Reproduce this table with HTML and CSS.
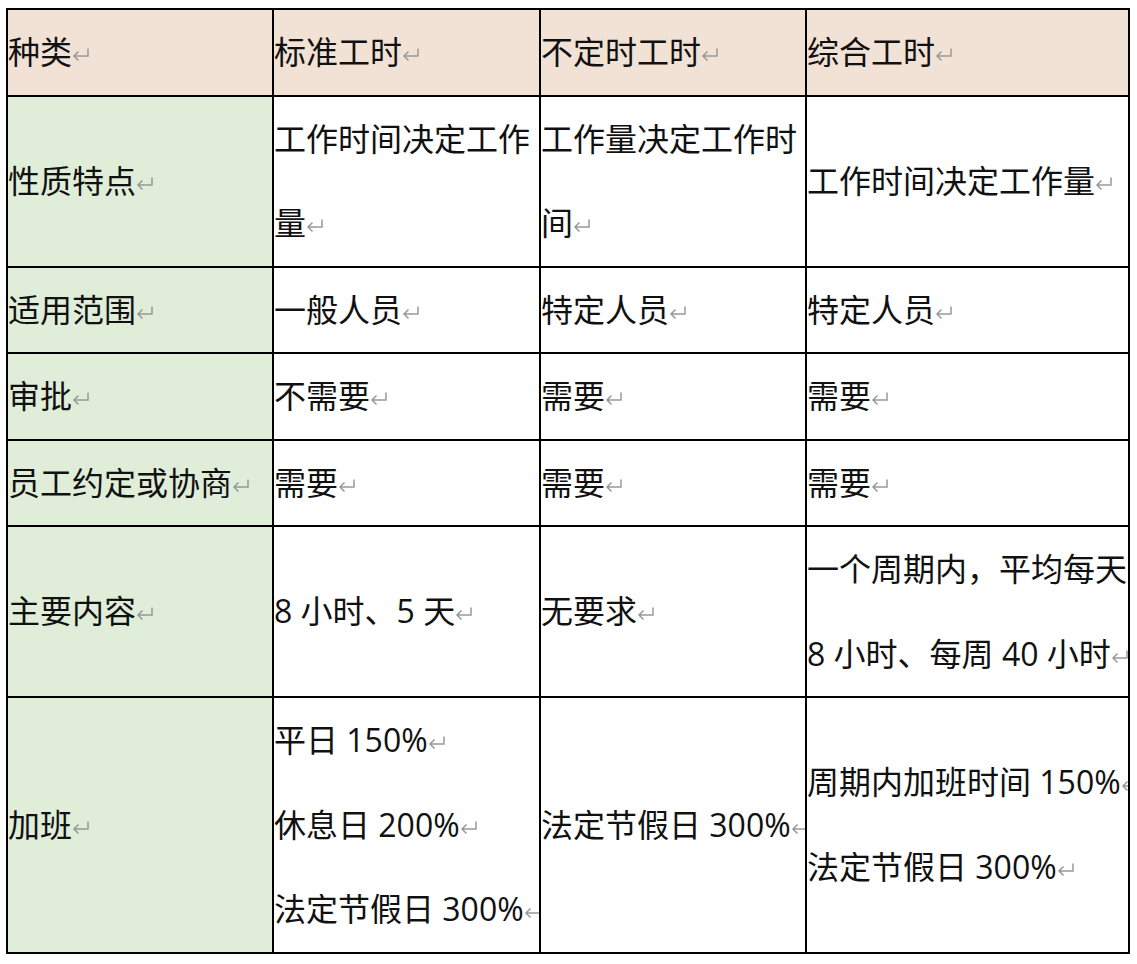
FILE: index.html
```html
<!DOCTYPE html>
<html lang="zh-CN">
<head>
<meta charset="utf-8">
<title>工时制度对比</title>
<link rel="stylesheet" href="styles.css">
</head>
<body>
<table class="tbl">
  <colgroup>
    <col class="c1"><col class="c2"><col class="c3"><col class="c4">
  </colgroup>
  <tr class="head">
    <td>种类<svg class="rm" viewBox="0 0 18 16"><path d="M16 1.5V9H2M6.5 4.5L2 9L6.5 13.5"/></svg></td>
    <td>标准工时<svg class="rm" viewBox="0 0 18 16"><path d="M16 1.5V9H2M6.5 4.5L2 9L6.5 13.5"/></svg></td>
    <td>不定时工时<svg class="rm" viewBox="0 0 18 16"><path d="M16 1.5V9H2M6.5 4.5L2 9L6.5 13.5"/></svg></td>
    <td>综合工时<svg class="rm" viewBox="0 0 18 16"><path d="M16 1.5V9H2M6.5 4.5L2 9L6.5 13.5"/></svg></td>
  </tr>
  <tr>
    <td class="lab">性质特点<svg class="rm" viewBox="0 0 18 16"><path d="M16 1.5V9H2M6.5 4.5L2 9L6.5 13.5"/></svg></td>
    <td><span class="ln">工作时间决定工作</span><span class="ln">量<svg class="rm" viewBox="0 0 18 16"><path d="M16 1.5V9H2M6.5 4.5L2 9L6.5 13.5"/></svg></span></td>
    <td><span class="ln">工作量决定工作时</span><span class="ln">间<svg class="rm" viewBox="0 0 18 16"><path d="M16 1.5V9H2M6.5 4.5L2 9L6.5 13.5"/></svg></span></td>
    <td>工作时间决定工作量<svg class="rm" viewBox="0 0 18 16"><path d="M16 1.5V9H2M6.5 4.5L2 9L6.5 13.5"/></svg></td>
  </tr>
  <tr>
    <td class="lab">适用范围<svg class="rm" viewBox="0 0 18 16"><path d="M16 1.5V9H2M6.5 4.5L2 9L6.5 13.5"/></svg></td>
    <td>一般人员<svg class="rm" viewBox="0 0 18 16"><path d="M16 1.5V9H2M6.5 4.5L2 9L6.5 13.5"/></svg></td>
    <td>特定人员<svg class="rm" viewBox="0 0 18 16"><path d="M16 1.5V9H2M6.5 4.5L2 9L6.5 13.5"/></svg></td>
    <td>特定人员<svg class="rm" viewBox="0 0 18 16"><path d="M16 1.5V9H2M6.5 4.5L2 9L6.5 13.5"/></svg></td>
  </tr>
  <tr>
    <td class="lab">审批<svg class="rm" viewBox="0 0 18 16"><path d="M16 1.5V9H2M6.5 4.5L2 9L6.5 13.5"/></svg></td>
    <td>不需要<svg class="rm" viewBox="0 0 18 16"><path d="M16 1.5V9H2M6.5 4.5L2 9L6.5 13.5"/></svg></td>
    <td>需要<svg class="rm" viewBox="0 0 18 16"><path d="M16 1.5V9H2M6.5 4.5L2 9L6.5 13.5"/></svg></td>
    <td>需要<svg class="rm" viewBox="0 0 18 16"><path d="M16 1.5V9H2M6.5 4.5L2 9L6.5 13.5"/></svg></td>
  </tr>
  <tr>
    <td class="lab">员工约定或协商<svg class="rm" viewBox="0 0 18 16"><path d="M16 1.5V9H2M6.5 4.5L2 9L6.5 13.5"/></svg></td>
    <td>需要<svg class="rm" viewBox="0 0 18 16"><path d="M16 1.5V9H2M6.5 4.5L2 9L6.5 13.5"/></svg></td>
    <td>需要<svg class="rm" viewBox="0 0 18 16"><path d="M16 1.5V9H2M6.5 4.5L2 9L6.5 13.5"/></svg></td>
    <td>需要<svg class="rm" viewBox="0 0 18 16"><path d="M16 1.5V9H2M6.5 4.5L2 9L6.5 13.5"/></svg></td>
  </tr>
  <tr>
    <td class="lab">主要内容<svg class="rm" viewBox="0 0 18 16"><path d="M16 1.5V9H2M6.5 4.5L2 9L6.5 13.5"/></svg></td>
    <td>8 小时、5 天<svg class="rm" viewBox="0 0 18 16"><path d="M16 1.5V9H2M6.5 4.5L2 9L6.5 13.5"/></svg></td>
    <td>无要求<svg class="rm" viewBox="0 0 18 16"><path d="M16 1.5V9H2M6.5 4.5L2 9L6.5 13.5"/></svg></td>
    <td><span class="ln">一个周期内，平均每天</span><span class="ln">8 小时、每周 40 小时<svg class="rm" viewBox="0 0 18 16"><path d="M16 1.5V9H2M6.5 4.5L2 9L6.5 13.5"/></svg></span></td>
  </tr>
  <tr>
    <td class="lab">加班<svg class="rm" viewBox="0 0 18 16"><path d="M16 1.5V9H2M6.5 4.5L2 9L6.5 13.5"/></svg></td>
    <td><span class="ln">平日 150%<svg class="rm" viewBox="0 0 18 16"><path d="M16 1.5V9H2M6.5 4.5L2 9L6.5 13.5"/></svg></span><span class="ln">休息日 200%<svg class="rm" viewBox="0 0 18 16"><path d="M16 1.5V9H2M6.5 4.5L2 9L6.5 13.5"/></svg></span><span class="ln">法定节假日 300%<svg class="rm" viewBox="0 0 18 16"><path d="M16 1.5V9H2M6.5 4.5L2 9L6.5 13.5"/></svg></span></td>
    <td>法定节假日 300%<svg class="rm" viewBox="0 0 18 16"><path d="M16 1.5V9H2M6.5 4.5L2 9L6.5 13.5"/></svg></td>
    <td><span class="ln">周期内加班时间 150%<svg class="rm" viewBox="0 0 18 16"><path d="M16 1.5V9H2M6.5 4.5L2 9L6.5 13.5"/></svg></span><span class="ln">法定节假日 300%<svg class="rm" viewBox="0 0 18 16"><path d="M16 1.5V9H2M6.5 4.5L2 9L6.5 13.5"/></svg></span></td>
  </tr>
</table>
</body>
</html>
```

FILE: styles.css
```css
html, body {
  margin: 0;
  padding: 0;
  background: #ffffff;
}

.tbl {
  margin: 8px 0 0 6px;
  width: 1122px;
  border-collapse: collapse;
  table-layout: fixed;
  border: 2px solid #000;
  font-family: "Open Sans", "Noto Sans CJK SC", sans-serif;
  font-size: 32px;
  color: #111;
}

.c1 { width: 266px; }
.c2 { width: 267px; }
.c3 { width: 266px; }
.c4 { width: 323px; }

.tbl td {
  border: 2px solid #000;
  padding: 0;
  line-height: 84.5px;
  vertical-align: middle;
  white-space: nowrap;
  overflow: hidden;
  text-align: left;
}

.head td {
  background: #f2e2d6;
}

.tbl td.lab {
  background: #dfedd9;
}

.ln {
  display: block;
}

.rm {
  width: 18px;
  height: 16px;
  vertical-align: 1px;
}

.rm path {
  fill: none;
  stroke: #999999;
  stroke-width: 1.5;
}
```
